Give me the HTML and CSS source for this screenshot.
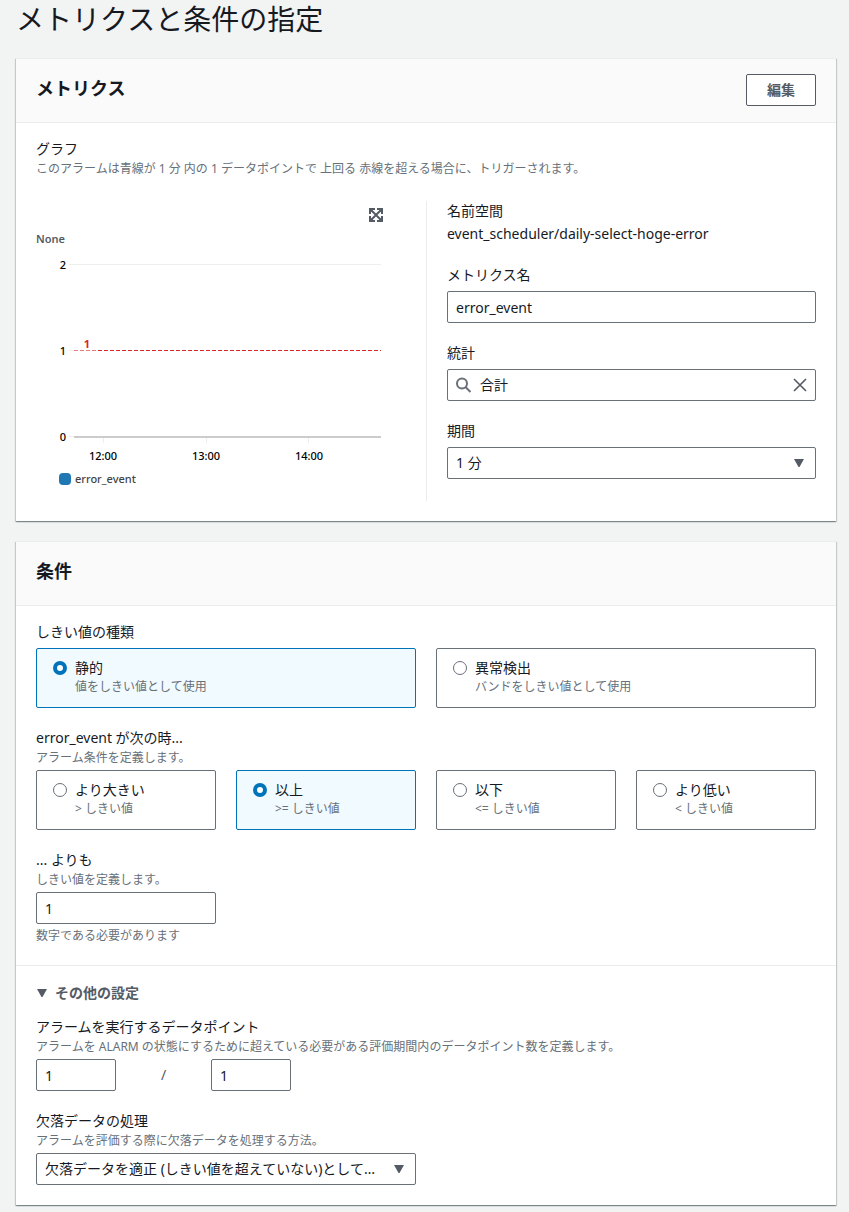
FILE: index.html
```html
<!DOCTYPE html>
<html lang="ja">
<head>
<meta charset="utf-8">
<meta name="viewport" content="width=device-width, initial-scale=1">
<title>メトリクスと条件の指定</title>
<link rel="stylesheet" href="styles.css">
</head>
<body>
<main class="page">
  <h1 class="page-title">メトリクスと条件の指定</h1>

  <section class="panel">
    <header class="panel-header">
      <h2 class="panel-title">メトリクス</h2>
      <button class="button" type="button">編集</button>
    </header>
    <div class="panel-body">
      <div class="intro">
        <div class="label">グラフ</div>
        <p class="description">このアラームは青線が 1 分 内の 1 データポイントで 上回る 赤線を超える場合に、トリガーされます。</p>
      </div>
      <div class="columns">
        <div class="chart">
          <div class="chart-tools">
            <button class="icon-button" type="button" aria-label="拡大">
              <svg width="14" height="14" viewBox="0 0 14 14" fill="#545b64" stroke="#545b64">
                <path stroke="none" d="M0 0h6v2H4L2 4v2H0zM8 0h6v6h-2V4l-2-2H8zM0 8h2v2l2 2h2v2H0zM12 8h2v6H8v-2h2l2-2z"/>
                <path stroke-width="2" d="M2 2l10 10M12 2L2 12"/>
              </svg>
            </button>
          </div>
          <svg class="chart-plot" width="346" height="236" viewBox="0 0 346 236" role="img" aria-label="error_event のグラフ">
            <text class="unit" x="0" y="13">None</text>
            <g class="grid">
              <path d="M33 34.5H345M33 120.5H38M33 206.5H38M67.5 208V213M170.5 208V213M272.5 208V213"/>
            </g>
            <path class="baseline" d="M38 207H345"/>
            <path class="threshold threshold-faded" d="M38 120.5H62"/>
            <path class="threshold" d="M62 120.5H345"/>
            <text class="threshold-label" x="51" y="118">1</text>
            <g class="axis axis-y">
              <text x="30" y="39">2</text>
              <text x="30" y="125">1</text>
              <text x="30" y="211">0</text>
            </g>
            <g class="axis axis-x">
              <text x="67" y="230">12:00</text>
              <text x="170" y="230">13:00</text>
              <text x="273" y="230">14:00</text>
            </g>
          </svg>
          <div class="legend"><span class="swatch"></span>error_event</div>
        </div>
        <div class="fields">
          <div>
            <div class="label">名前空間</div>
            <div class="value">event_scheduler/daily-select-hoge-error</div>
          </div>
          <div class="field">
            <label class="label" for="metric">メトリクス名</label>
            <input class="control" id="metric" type="text" value="error_event">
          </div>
          <div class="field">
            <label class="label" for="stat">統計</label>
            <div class="control search">
              <svg width="16" height="16" viewBox="0 0 16 16" fill="none" stroke="#687078" stroke-width="2">
                <circle cx="6" cy="6.500" r="5"/><path d="M9.500 10l5 5"/>
              </svg>
              <input class="search-input" id="stat" type="text" value="合計">
              <button class="icon-button" type="button" aria-label="クリア">
                <svg width="14" height="14" viewBox="0 0 14 14" fill="none" stroke="#545b64" stroke-width="1.6">
                  <path d="M1 1l12 12M13 1L1 13"/>
                </svg>
              </button>
            </div>
          </div>
          <div class="field">
            <label class="label" for="period">期間</label>
            <div class="select">
              <select class="control" id="period"><option>1 分</option></select>
              <svg class="caret" width="10" height="8" viewBox="0 0 10 8" fill="#545b64"><path d="M0 0h10L5.500 8h-1z"/></svg>
            </div>
          </div>
        </div>
      </div>
    </div>
  </section>

  <section class="panel">
    <header class="panel-header">
      <h2 class="panel-title">条件</h2>
    </header>
    <div class="panel-body stack">
      <div class="field" role="radiogroup" aria-labelledby="type-label">
        <div class="label" id="type-label">しきい値の種類</div>
        <div class="tiles tiles-2">
          <label class="tile">
            <input class="radio" type="radio" name="type" checked>
            <span><span class="label">静的</span><span class="description">値をしきい値として使用</span></span>
          </label>
          <label class="tile">
            <input class="radio" type="radio" name="type">
            <span><span class="label">異常検出</span><span class="description">バンドをしきい値として使用</span></span>
          </label>
        </div>
      </div>

      <div class="field-described" role="radiogroup" aria-labelledby="operator-label">
        <div class="intro">
          <div class="label" id="operator-label">error_event が次の時...</div>
          <p class="description">アラーム条件を定義します。</p>
        </div>
        <div class="tiles tiles-4">
          <label class="tile">
            <input class="radio" type="radio" name="operator">
            <span><span class="label">より大きい</span><span class="description">&gt; しきい値</span></span>
          </label>
          <label class="tile">
            <input class="radio" type="radio" name="operator" checked>
            <span><span class="label">以上</span><span class="description">&gt;= しきい値</span></span>
          </label>
          <label class="tile">
            <input class="radio" type="radio" name="operator">
            <span><span class="label">以下</span><span class="description">&lt;= しきい値</span></span>
          </label>
          <label class="tile">
            <input class="radio" type="radio" name="operator">
            <span><span class="label">より低い</span><span class="description">&lt; しきい値</span></span>
          </label>
        </div>
      </div>

      <div class="field-described">
        <div class="intro">
          <label class="label" for="threshold">... よりも</label>
          <p class="description">しきい値を定義します。</p>
        </div>
        <input class="control quarter" id="threshold" type="text" value="1">
        <p class="description">数字である必要があります</p>
      </div>
    </div>

    <details class="more" open>
      <summary class="more-summary">
        <svg width="10" height="8" viewBox="0 0 10 8" fill="#545b64"><path d="M0 0h10L5.500 8h-1z"/></svg>
        その他の設定
      </summary>
      <div class="stack">
        <div class="field-described">
          <div class="intro">
            <label class="label" for="points">アラームを実行するデータポイント</label>
            <p class="description">アラームを ALARM の状態にするために超えている必要がある評価期間内のデータポイント数を定義します。</p>
          </div>
          <div class="ratio">
            <input class="control small" id="points" type="text" value="1">
            <span class="slash">/</span>
            <input class="control small" type="text" value="1" aria-label="評価期間">
          </div>
        </div>
        <div class="field-described">
          <div class="intro">
            <label class="label" for="missing">欠落データの処理</label>
            <p class="description">アラームを評価する際に欠落データを処理する方法。</p>
          </div>
          <div class="select half">
            <select class="control" id="missing"><option>欠落データを適正 (しきい値を超えていない)として処理</option></select>
            <svg class="caret" width="10" height="8" viewBox="0 0 10 8" fill="#545b64"><path d="M0 0h10L5.500 8h-1z"/></svg>
          </div>
        </div>
      </div>
    </details>
  </section>
</main>
</body>
</html>
```
FILE: styles.css
```css
* {
  box-sizing: border-box;
}

body {
  margin: 0;
  background: #f2f3f3;
  color: #16191f;
  font: 14px/20px "Noto Sans", "Noto Sans CJK JP", sans-serif;
}

h1, h2, p {
  margin: 0;
}

input, select, button {
  margin: 0;
  color: inherit;
  font: inherit;
}

svg {
  display: block;
}

.page {
  display: flex;
  flex-direction: column;
  gap: 20px;
  padding: 0 13px 7px 16px;
}

.page-title {
  font-size: 28px;
  font-weight: 400;
  line-height: 38px;
}

.panel {
  background: #fff;
  border-top: 1px solid #eaeded;
  box-shadow: 0 1px 1px 0 rgba(0, 28, 36, .3), 1px 1px 1px 0 rgba(0, 28, 36, .15), -1px 1px 1px 0 rgba(0, 28, 36, .15);
}

.panel-header {
  display: flex;
  align-items: flex-start;
  justify-content: space-between;
  min-height: 64px;
  padding: 15px 20px;
  background: #fafafa;
  border-bottom: 1px solid #eaeded;
}

.panel-title {
  font-size: 18px;
  font-weight: 700;
  line-height: 28px;
}

.button {
  height: 32px;
  padding: 0 20px;
  background: #fff;
  border: 1px solid #545b64;
  border-radius: 2px;
  color: #545b64;
  font-weight: 700;
}

.icon-button {
  padding: 0;
  background: none;
  border: 0;
}

.panel-body {
  padding: 16px 20px 20px;
}

.label {
  display: block;
}

.description {
  display: block;
  color: #687078;
  font-size: 12px;
  line-height: 18px;
}

.intro {
  display: flex;
  flex-direction: column;
  gap: 1px;
}

.value {
  margin-top: 2px;
  line-height: 22px;
}

.columns {
  display: grid;
  grid-template-columns: 1fr 1fr;
  margin-top: 23px;
}

.chart {
  min-width: 0;
}

.chart-tools {
  display: flex;
  align-items: flex-start;
  justify-content: flex-end;
  height: 29px;
  padding: 7px 43px 0 0;
}

.chart-plot {
  max-width: 100%;
  font-size: 11px;
  font-weight: 500;
}

.unit {
  fill: #545b64;
  font-weight: 600;
}

.grid {
  stroke: #eee;
}

.baseline {
  stroke: #ccc;
  stroke-width: 2px;
}

.threshold {
  stroke: #d62728;
  stroke-dasharray: 4 2;
}

.threshold-faded {
  opacity: .6;
}

.threshold-label {
  fill: #d62728;
  font-weight: 700;
  text-anchor: middle;
}

.axis {
  fill: #000;
}

.axis-y {
  text-anchor: end;
}

.axis-x {
  text-anchor: middle;
}

.legend {
  display: flex;
  align-items: center;
  gap: 4px;
  padding: 4px 0 0 23px;
  color: #444;
  font-size: 11px;
  font-weight: 500;
  line-height: 18px;
}

.swatch {
  width: 12px;
  height: 12px;
  background: #1f77b4;
  border-radius: 4px;
}

.fields {
  display: flex;
  flex-direction: column;
  gap: 20px;
  min-width: 0;
  padding: 0 0 22px 20px;
  border-left: 1px solid #eaeded;
}

.field {
  display: flex;
  flex-direction: column;
  gap: 6px;
}

.field-described {
  display: flex;
  flex-direction: column;
  gap: 3px;
}

.stack {
  display: flex;
  flex-direction: column;
  gap: 20px;
}

.control {
  width: 100%;
  height: 32px;
  padding: 0 8px;
  background: #fff;
  border: 1px solid #687078;
  border-radius: 2px;
}

.search {
  display: flex;
  align-items: center;
  gap: 8px;
}

.search-input {
  flex: 1;
  min-width: 0;
  padding: 0;
  background: none;
  border: 0;
  outline: 0;
}

.select {
  display: grid;
  align-items: center;
}

.select > * {
  grid-area: 1 / 1;
}

.select .control {
  padding-right: 36px;
  appearance: none;
  text-overflow: ellipsis;
}

.caret {
  justify-self: end;
  margin-right: 12px;
  pointer-events: none;
}

.tiles {
  display: grid;
  gap: 20px;
}

.tiles-2 {
  grid-template-columns: repeat(2, 1fr);
}

.tiles-4 {
  grid-template-columns: repeat(4, 1fr);
}

.tile {
  display: flex;
  align-items: flex-start;
  gap: 8px;
  padding: 9px 16px 11px;
  border: 1px solid #687078;
  border-radius: 2px;
}

.tile:has(:checked) {
  background: #f1faff;
  border-color: #0073bb;
}

.radio {
  flex: none;
  width: 14px;
  height: 14px;
  margin-top: 3px;
  appearance: none;
  background: #fff;
  border: 1px solid #687078;
  border-radius: 50%;
}

.radio:checked {
  border: 4px solid #0073bb;
}

.control.quarter {
  width: calc(25% - 15px);
}

.half {
  width: calc(50% - 10px);
}

.control.small {
  width: 80px;
}

.more {
  padding: 17px 20px 20px;
  border-top: 1px solid #eaeded;
}

.more-summary {
  display: flex;
  align-items: center;
  gap: 8px;
  margin-bottom: 14px;
  padding-left: 1px;
  color: #545b64;
  font-weight: 700;
  list-style: none;
}

.ratio {
  display: flex;
  align-items: center;
}

.slash {
  width: 95px;
  color: #545b64;
  text-align: center;
}
```
